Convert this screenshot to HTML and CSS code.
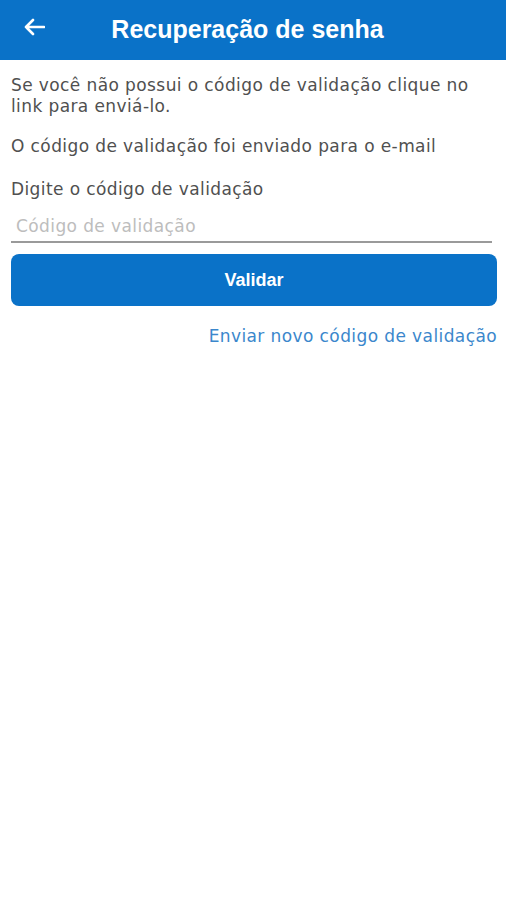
FILE: index.html
```html
<!DOCTYPE html>
<html lang="pt">
<head>
<meta charset="utf-8">
<link rel="stylesheet" href="styles.css">
</head>
<body>
<header class="bar">
  <button class="back" aria-label="Voltar">
    <svg width="22" height="18" viewBox="0 0 22 18"><path d="M21 9H3M10 2L3 9l7 7" fill="none" stroke="#fff" stroke-width="2.6" stroke-linecap="round" stroke-linejoin="round"/></svg>
  </button>
  <h1 class="title">Recuperação de senha</h1>
</header>
<main class="content">
  <p class="text t1">Se você não possui o código de validação clique no link para enviá-lo.</p>
  <p class="text t2">O código de validação foi enviado para o e-mail</p>
  <p class="text t3">Digite o código de validação</p>
  <div class="field"><span class="placeholder">Código de validação</span></div>
  <button class="btn">Validar</button>
  <a class="link">Enviar novo código de validação</a>
</main>
</body>
</html>
```
FILE: styles.css
```css
* { box-sizing: border-box; }
body { margin: 0; background: #fff; font-family: "DejaVu Sans", sans-serif; }
.bar { height: 60px; background: #0a72c8; display: flex; align-items: center; position: relative; }
.back { background: none; border: 0; padding: 0; margin-left: 23px; margin-top: -6px; display: flex; }
.title { margin: 0; position: absolute; left: 0; right: 11px; text-align: center; top: 14px; line-height: 30px; pointer-events: none; font-family: "Liberation Sans", Arial, sans-serif; font-weight: 700; font-size: 25px; color: #fff; }
.content { padding: 14.5px 9px 0 11px; display: flex; flex-direction: column; }
.text { margin: 0; font-size: 17px; letter-spacing: 0.4px; line-height: 21px; color: #505050; }
.t1 { padding-right: 10px; }
.t2 { margin-top: 19px; }
.t3 { margin-top: 22px; }
.field { margin-top: 8px; height: 35.5px; border-bottom: 2px solid #9a9a9a; width: 481px; padding: 8px 0 0 5px; line-height: 21px; }
.placeholder { font-size: 17px; letter-spacing: 0.4px; color: #bdbdbd; }
.btn { margin-top: 11px; height: 52px; width: 486px; border: 0; border-radius: 8px; background: #0a72c8; color: #fff; font-family: "Liberation Sans", Arial, sans-serif; font-weight: 700; font-size: 18px; }
.link { margin-top: 19.5px; align-self: flex-end; font-size: 17px; letter-spacing: 0.4px; line-height: 21px; color: #3b87cc; }
```
